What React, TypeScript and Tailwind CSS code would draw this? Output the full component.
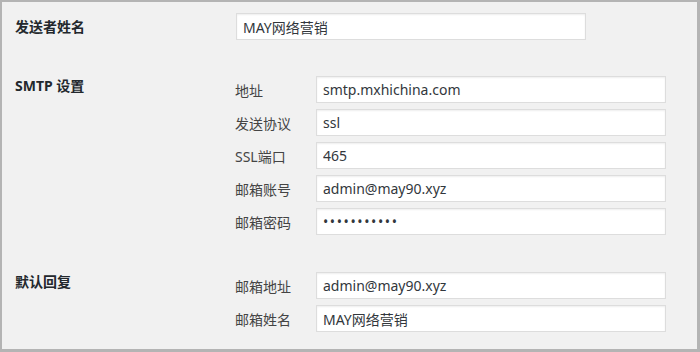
import React from "react";

const font = { fontFamily: '"Noto Sans", "Noto Sans CJK SC", sans-serif' };

const smtpFields = [
  { label: "地址", value: "smtp.mxhichina.com" },
  { label: "发送协议", value: "ssl" },
  { label: "SSL端口", value: "465" },
  { label: "邮箱账号", value: "admin@may90.xyz" },
  { label: "邮箱密码", value: "password123", type: "password" },
];

const replyFields = [
  { label: "邮箱地址", value: "admin@may90.xyz" },
  { label: "邮箱姓名", value: "MAY网络营销" },
];

function TextInput({ value, type = "text" }: { value: string; type?: string }) {
  return (
    <input
      type={type}
      defaultValue={value}
      readOnly
      className={
        "h-[27px] w-[350px] border border-[#dddddd] bg-white px-[6px] text-[14px] text-[#32373c] shadow-[inset_0_1px_2px_rgba(0,0,0,0.07)] outline-none " +
        (type === "password" ? "tracking-[1.6px]" : "")
      }
      style={font}
    />
  );
}

function SubFields({ fields }: { fields: { label: string; value: string; type?: string }[] }) {
  return (
    <div className="flex flex-col gap-[6px]">
      {fields.map((f) => (
        <div key={f.label} className="flex items-center">
          <span className="w-[81px] pt-[3px] text-[14px] leading-[20px] text-[#444]">{f.label}</span>
          <TextInput value={f.value} type={f.type} />
        </div>
      ))}
    </div>
  );
}

export default function App() {
  return (
    <div
      className="h-[352px] w-[700px] border-t-2 border-l-2 border-r-[3px] border-b-[3px] border-[#b4b4b4] bg-[#f1f1f1] pl-[13px] pt-[11px]"
      style={font}
    >
      <div className="flex items-center">
        <span className="w-[221px] text-[14px] font-bold leading-[20px] text-[#23282d]">发送者姓名</span>
        <TextInput value="MAY网络营销" />
      </div>

      <div className="mt-[36px] flex">
        <span className="w-[220px] text-[14px] font-bold leading-[20px] text-[#23282d]">SMTP 设置</span>
        <SubFields fields={smtpFields} />
      </div>

      <div className="mt-[37px] flex">
        <span className="w-[220px] text-[14px] font-bold leading-[20px] text-[#23282d]">默认回复</span>
        <SubFields fields={replyFields} />
      </div>
    </div>
  );
}
